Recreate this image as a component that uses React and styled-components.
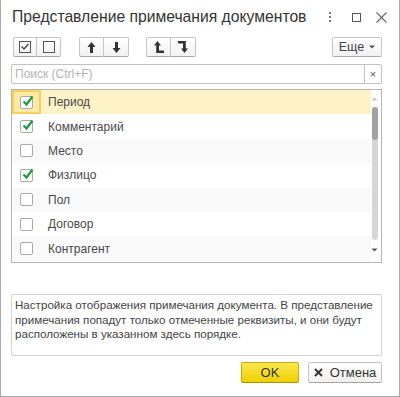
import styled, { createGlobalStyle } from 'styled-components';

const GlobalStyle = createGlobalStyle`
  body { margin: 0; font-family: "Liberation Sans", Arial, sans-serif; background: #fff; }
  * { box-sizing: border-box; }
`;

const Window = styled.div`
  width: 400px; height: 397px; background: #fff;
  border: 1px solid #a8a8a8; border-top: none;
  padding: 0 17px 0 10px;
  display: flex; flex-direction: column;
`;

const TitleBar = styled.div`
  height: 37px; display: flex; align-items: flex-start; padding-top: 7px;
`;

const Title = styled.div`
  flex: 1; font-size: 15.7px; line-height: 20px; color: #333; padding-left: 1px;
`;

const WinButtons = styled.div`
  display: flex; align-items: center; margin-right: -12px; height: 20px;
`;

const WinBtn = styled.div`
  width: 25px; height: 20px; display: flex; align-items: center; justify-content: center;
  margin-right: ${p => p.$mr || 0}px;
`;

const Toolbar = styled.div`
  height: 21px; display: flex; align-items: flex-start; padding-left: 2px;
`;

const Group = styled.div`
  display: flex; margin-right: ${p => p.$gap || 0}px;
`;

const ToolBtn = styled.div`
  width: ${p => p.$w || 24}px; height: 20px;
  display: flex; align-items: center; justify-content: center; gap: 5px;
  background: linear-gradient(#ffffff, #f2f2f2);
  border: 1px solid #c6c6c6; border-bottom-color: #a9a9a9;
  color: #444; font-size: 12.5px;
  & + & { border-left: none; }
  &:first-child { border-radius: 2px 0 0 2px; }
  &:last-child { border-radius: 0 2px 2px 0; }
  &:only-child { border-radius: 2px; }
`;

const Spacer = styled.div` flex: 1; `;

const Search = styled.div`
  margin-top: 6px; height: 20px; display: flex;
  border: 1px solid #c2c2c2; border-radius: 2px; background: #fff;
`;

const SearchText = styled.div`
  flex: 1; font-size: 12px; line-height: 18px; color: #b3b3b3; padding-left: 3px;
`;

const ClearBtn = styled.div`
  width: 17px; border-left: 1px solid #c2c2c2; display: flex; align-items: center; justify-content: center;
  font-size: 11px; color: #555;
`;

const List = styled.div`
  margin-top: 5px; height: 174px; border: 1px solid #b4b4b4;
  display: flex; padding: 0 3px 0 0;
`;

const Rows = styled.div` flex: 1; `;

const Row = styled.div`
  height: 24.4px; display: flex; align-items: center;
  background: ${p => (p.$selected ? '#fef2c7' : p.$odd ? '#f9f9f9' : '#fff')};
  font-size: 12px; color: #4a4a4a;
`;

const CheckCell = styled.div`
  width: 29px; height: 100%; display: flex; align-items: center; justify-content: center; margin-right: 7px;
  ${p => p.$current && 'background: #fce9a3; border: 2px solid #f7cf5c;'}
`;

const Box = styled.div`
  width: 13px; height: 13px; border: 1px solid #a9a9a9; border-radius: 2px; background: #fff;
  position: relative;
`;

const Check = styled.svg`
  position: absolute; left: 0px; top: -3px;
`;

const Scroll = styled.div`
  width: 7px; display: flex; flex-direction: column; align-items: center; padding-top: 7px;
`;

const Track = styled.div`
  width: 6px; height: 133px; margin-top: 6px; border-radius: 3px; background: #d6d6d6; position: relative;
`;

const Thumb = styled.div`
  position: absolute; left: 0; top: 0; width: 6px; height: 33px; border-radius: 3px; background: #a2a2a2;
`;

const Desc = styled.div`
  margin-top: 31px; height: 62px; border: 1px solid #d3d3d3; border-radius: 2px;
  padding: 3px 3px; font-size: 11.6px; line-height: 14.5px; color: #444;
`;

const Footer = styled.div`
  margin-top: 6px; display: flex; justify-content: flex-end; gap: 9px;
`;

const Button = styled.div`
  height: 21px; width: ${p => p.$w}px; border-radius: 2px;
  display: flex; align-items: center; justify-content: center; gap: 7px;
  font-size: 13px; color: #333;
  background: ${p => (p.$primary ? 'linear-gradient(#fbe84f, #f0d000)' : 'linear-gradient(#ffffff, #f0f0f0)')};
  border: 1px solid ${p => (p.$primary ? '#c9ab00' : '#c3c3c3')};
  border-bottom-color: ${p => (p.$primary ? '#a98f00' : '#a5a5a5')};
`;

const items = [
  { name: 'Период', on: true },
  { name: 'Комментарий', on: true },
  { name: 'Место', on: false },
  { name: 'Физлицо', on: true },
  { name: 'Пол', on: false },
  { name: 'Договор', on: false },
  { name: 'Контрагент', on: false },
];

const CheckMark = () => (
  <Check width="14" height="14" viewBox="0 0 14 14">
    <path d="M2.5 7.5 L5.5 10.5 L11.5 2.5" fill="none" stroke="#1e9a3c" strokeWidth="2.2" />
  </Check>
);

export default function App() {
  return (
    <Window>
      <GlobalStyle />
      <TitleBar>
        <Title>Представление примечания документов</Title>
        <WinButtons>
          <WinBtn $mr={2}>
            <svg width="4" height="12" viewBox="0 0 4 12">
              <rect x="1" y="1" width="2" height="2" fill="#777" />
              <rect x="1" y="5" width="2" height="2" fill="#777" />
              <rect x="1" y="9" width="2" height="2" fill="#777" />
            </svg>
          </WinBtn>
          <WinBtn>
            <svg width="9" height="9" viewBox="0 0 9 9">
              <rect x="0.5" y="0.5" width="8" height="8" fill="none" stroke="#555" />
            </svg>
          </WinBtn>
          <WinBtn>
            <svg width="11" height="11" viewBox="0 0 11 11">
              <path d="M0.5 0.5 L10.5 10.5 M10.5 0.5 L0.5 10.5" stroke="#666" strokeWidth="1.1" />
            </svg>
          </WinBtn>
        </WinButtons>
      </TitleBar>

      <Toolbar>
        <Group $gap={18}>
          <ToolBtn>
            <svg width="12" height="12" viewBox="0 0 12 12">
              <rect x="0.5" y="0.5" width="11" height="11" fill="none" stroke="#555" />
              <path d="M2.5 5.5 L5 8 L9.5 3" fill="none" stroke="#444" strokeWidth="1.3" />
            </svg>
          </ToolBtn>
          <ToolBtn>
            <svg width="12" height="12" viewBox="0 0 12 12">
              <rect x="0.5" y="0.5" width="11" height="11" fill="none" stroke="#555" />
            </svg>
          </ToolBtn>
        </Group>
        <Group $gap={17}>
          <ToolBtn $w={25}>
            <svg width="9" height="11" viewBox="0 0 9 11">
              <path d="M4.5 0 L8.5 5 H6 V11 H3 V5 H0.5 Z" fill="#333" />
            </svg>
          </ToolBtn>
          <ToolBtn $w={25}>
            <svg width="9" height="11" viewBox="0 0 9 11">
              <path d="M4.5 11 L8.5 6 H6 V0 H3 V6 H0.5 Z" fill="#333" />
            </svg>
          </ToolBtn>
        </Group>
        <Group>
          <ToolBtn $w={25}>
            <svg width="10" height="12" viewBox="0 0 10 12">
              <path d="M3.5 0 L7 4.5 H5 V9.5 H10 V12 H2.2 V4.5 H0 Z" fill="#333" />
            </svg>
          </ToolBtn>
          <ToolBtn $w={25}>
            <svg width="10" height="12" viewBox="0 0 10 12">
              <path d="M6.5 12 L3 7.5 H5 V2.5 H0 V0 H7.8 V7.5 H10 Z" fill="#333" />
            </svg>
          </ToolBtn>
        </Group>
        <Spacer />
        <Group>
          <ToolBtn $w={50}>
            Еще
            <svg width="6" height="4" viewBox="0 0 6 4">
              <path d="M0 0.5 H6 L3 3.5 Z" fill="#555" />
            </svg>
          </ToolBtn>
        </Group>
      </Toolbar>

      <Search>
        <SearchText>Поиск (Ctrl+F)</SearchText>
        <ClearBtn>×</ClearBtn>
      </Search>

      <List>
        <Rows>
          {items.map((it, i) => (
            <Row key={it.name} $selected={i === 0} $odd={i % 2 === 0 && i > 0}>
              <CheckCell $current={i === 0}>
                <Box>{it.on && <CheckMark />}</Box>
              </CheckCell>
              {it.name}
            </Row>
          ))}
        </Rows>
        <Scroll>
          <svg width="7" height="4" viewBox="0 0 7 4">
            <path d="M0.5 3.5 H6.5 L3.5 0.5 Z" fill="#c4c4c4" />
          </svg>
          <Track><Thumb /></Track>
          <svg width="7" height="4" viewBox="0 0 7 4" style={{ marginTop: 8 }}>
            <path d="M0.5 0.5 H6.5 L3.5 3.5 Z" fill="#555" />
          </svg>
        </Scroll>
      </List>

      <Desc>
        Настройка отображения примечания документа. В представление примечания попадут только отмеченные реквизиты, и они будут расположены в указанном здесь порядке.
      </Desc>

      <Footer>
        <Button $primary $w={58}>OK</Button>
        <Button $w={74}>
          <svg width="9" height="9" viewBox="0 0 9 9">
            <path d="M1 1 L8 8 M8 1 L1 8" stroke="#333" strokeWidth="1.9" />
          </svg>
          Отмена
        </Button>
      </Footer>
    </Window>
  );
}
